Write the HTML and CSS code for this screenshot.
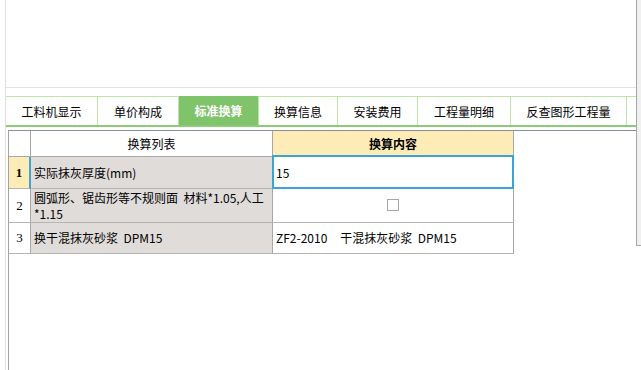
FILE: index.html
```html
<!DOCTYPE html>
<html lang="zh-CN">
<head>
<meta charset="utf-8">
<title>标准换算</title>
<link rel="stylesheet" href="styles.css">
</head>
<body>
<div class="page">
  <div class="panel">
    <div class="top"></div>
    <div class="band"></div>
    <div class="tabs">
      <div class="tab w1">工料机显示</div>
      <div class="tab w2">单价构成</div>
      <div class="tab w3 active">标准换算</div>
      <div class="tab w4">换算信息</div>
      <div class="tab w5">安装费用</div>
      <div class="tab w6">工程量明细</div>
      <div class="tab w7">反查图形工程量</div>
    </div>
    <div class="grid">
      <div class="sheet">
        <div class="cell rn hdr"></div>
        <div class="cell c1 hdr center">换算列表</div>
        <div class="cell c2 hdr center bold yellow">换算内容</div>

        <div class="cell rn r1 yellow sel-row bold num">1</div>
        <div class="cell c1 r1 gray">实际抹灰厚度(mm)</div>
        <div class="cell c2 r1 selected">15</div>

        <div class="cell rn r2 num">2</div>
        <div class="cell c1 r2 gray two">圆弧形、锯齿形等不规则面&nbsp; 材料*1.05,人工<br>*1.15</div>
        <div class="cell c2 r2 center"><span class="check"></span></div>

        <div class="cell rn r3 num">3</div>
        <div class="cell c1 r3 gray">换干混抹灰砂浆&nbsp; DPM15</div>
        <div class="cell c2 r3">ZF2-2010<span class="gap"></span>干混抹灰砂浆&nbsp; DPM15</div>
      </div>
    </div>
  </div>
  <div class="strip"></div>
</div>
</body>
</html>
```

FILE: styles.css
```css
html, body {
  margin: 0;
  padding: 0;
  background: #ffffff;
}
body {
  width: 641px;
  height: 370px;
  overflow: hidden;
  font-family: "Noto Sans CJK SC", "Noto Sans", sans-serif;
  font-size: 12px;
  color: #000;
}
.page {
  display: flex;
  align-items: flex-start;
  height: 370px;
}
.panel {
  margin-left: 5px;
  width: 630px;
  height: 370px;
  border-left: 1px solid #dedede;
  display: flex;
  flex-direction: column;
}
.top {
  height: 87px;
  border-bottom: 1px solid #e3e3e3;
  flex: none;
}
.band {
  height: 8px;
  flex: none;
}
.tabs {
  flex: none;
  display: flex;
  height: 28px;
  border-top: 1px solid #bde5a6;
  border-bottom: 2px solid #8ccb78;
}
.tab {
  box-sizing: border-box;
  height: 28px;
  border-right: 1px solid #bde5a6;
  display: flex;
  align-items: center;
  justify-content: center;
  font-size: 12px;
  line-height: 14px;
  padding-top: 1px;
}
.tab.active {
  background: #7fc36b;
  color: #fff;
  font-weight: bold;
  margin-top: -1px;
  height: 29px;
}
.w1 { width: 92px; }
.w2 { width: 81px; }
.w3 { width: 80px; }
.w4 { width: 79px; }
.w5 { width: 80px; }
.w6 { width: 93px; }
.w7 { width: 116px; }

.grid {
  flex: 1;
  margin-top: 3px;
  margin-left: 2px;
  border-top: 1px solid #878e97;
  border-left: 1px solid #a3a3a3;
}
.sheet {
  display: grid;
  grid-template-columns: 22px 242px 241px;
  grid-template-rows: 26px 32px 34px 31px;
  width: 505px;
}
.cell {
  box-sizing: border-box;
  border-right: 1px solid #a8a8a8;
  border-bottom: 1px solid #b4b4b4;
  display: flex;
  align-items: center;
  padding-left: 3px;
  line-height: 16px;
  white-space: nowrap;
  position: relative;
}
.hdr {
  border-bottom-color: #a8a8a8;
}
.center {
  justify-content: center;
  padding-left: 0;
}
.num {
  justify-content: center;
  padding-left: 0;
  font-family: "Liberation Serif", "DejaVu Serif", serif;
  font-size: 13px;
}
.bold { font-weight: bold; }
.yellow { background: #feecb6; }
.gray { background: #e0dcd9; }
.sel-row {
  border-right: 2px solid #3ba3d6;
}
.two {
  align-items: flex-start;
  padding-top: 1px;
}
.gap {
  display: inline-block;
  width: 13px;
}
.selected::after {
  content: "";
  position: absolute;
  left: -1px;
  top: -2px;
  right: -1px;
  bottom: -1px;
  border: 2px solid #3ba3d6;
}
.check {
  display: block;
  width: 12px;
  height: 12px;
  box-sizing: border-box;
  border: 1px solid #a6a6a6;
  background: #fff;
  margin-top: -1px;
}
.strip {
  flex: none;
  width: 5px;
  height: 246px;
  box-sizing: border-box;
  background: #f0f0f0;
  border-left: 1px solid #a6a6a6;
  border-bottom: 1px solid #a6a6a6;
}
```
